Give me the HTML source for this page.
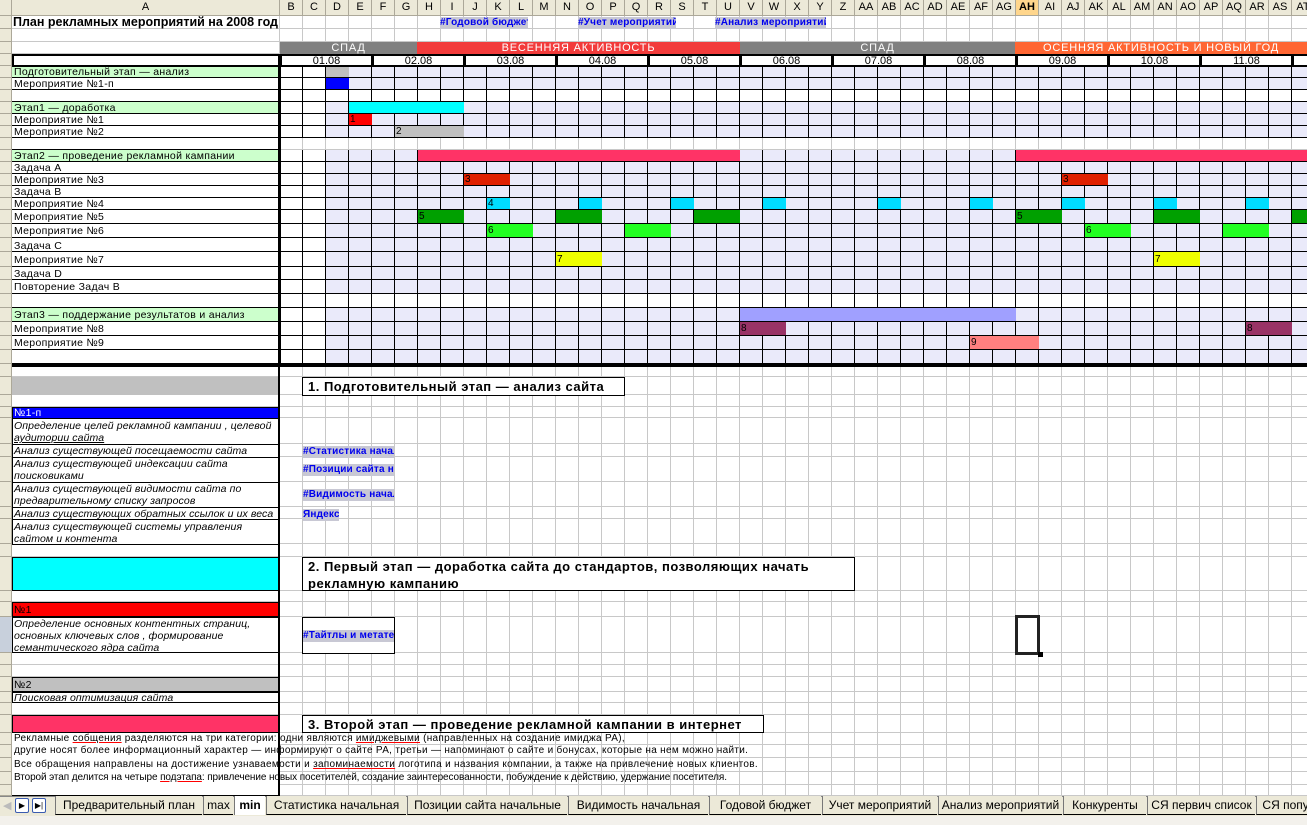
<!DOCTYPE html>
<html><head><meta charset="utf-8"><style>
*{margin:0;padding:0;box-sizing:border-box}
body{width:1307px;height:825px;position:relative;overflow:hidden;background:#fff;font-family:"Liberation Sans","DejaVu Sans",sans-serif;font-size:11px;color:#000}
.a{position:absolute;white-space:nowrap}
.t{position:absolute;white-space:nowrap;font-size:10.5px;line-height:12px;letter-spacing:.3px;padding-left:2px}
.it{font-style:italic;letter-spacing:.1px;font-size:10.5px}
.lk{position:absolute;color:#0000ee;font-weight:bold;font-size:10px;background:#c8c8d4;line-height:12px;letter-spacing:.2px;white-space:nowrap;overflow:hidden}
.hd{position:absolute;top:0;height:16px;background:#ece9d8;border-right:1px solid #aca899;border-bottom:1px solid #aca899;text-align:center;font-size:11px;line-height:15px;color:#000}
.tab{position:absolute;top:796px;height:19px;line-height:18px;font-size:12px;text-align:center;border-bottom:1px solid #000}
.bx{position:absolute;border:1px solid #000;background:#fff;font-weight:bold;font-size:13px;letter-spacing:.5px;padding-left:5px;line-height:17px;white-space:nowrap}
</style></head><body>
<div id="g"></div>

<div class="a" style="left:13px;top:15px;font-weight:bold;font-size:12.5px;line-height:14px">План рекламных мероприятий на 2008 год</div>

<div class="lk" style="left:440px;top:17px;width:88px">#Годовой бюджет</div>
<div class="lk" style="left:578px;top:17px;width:98px">#Учет мероприятий</div>
<div class="lk" style="left:715px;top:17px;width:111px">#Анализ мероприятий</div>

<div id="txt">
<div class="t" style="left:12px;top:66px">Подготовительный этап — анализ</div>
<div class="t" style="left:12px;top:78px">Мероприятие №1-п</div>
<div class="t" style="left:12px;top:102px">Этап1 — доработка</div>
<div class="t" style="left:12px;top:114px">Мероприятие №1</div>
<div class="t" style="left:12px;top:126px">Мероприятие №2</div>
<div class="t" style="left:12px;top:150px">Этап2 — проведение рекламной кампании</div>
<div class="t" style="left:12px;top:162px">Задача А</div>
<div class="t" style="left:12px;top:174px">Мероприятие №3</div>
<div class="t" style="left:12px;top:186px">Задача В</div>
<div class="t" style="left:12px;top:198px">Мероприятие №4</div>
<div class="t" style="left:12px;top:211px">Мероприятие №5</div>
<div class="t" style="left:12px;top:225px">Мероприятие №6</div>
<div class="t" style="left:12px;top:240px">Задача С</div>
<div class="t" style="left:12px;top:254px">Мероприятие №7</div>
<div class="t" style="left:12px;top:268px">Задача D</div>
<div class="t" style="left:12px;top:281px">Повторение Задач В</div>
<div class="t" style="left:12px;top:309px">Этап3 — поддержание результатов и анализ</div>
<div class="t" style="left:12px;top:323px">Мероприятие №8</div>
<div class="t" style="left:12px;top:337px">Мероприятие №9</div>

<div class="t" style="left:12px;top:407px;color:#fff">№1-п</div>
<div class="t it" style="left:12px;top:420px">Определение целей рекламной кампании , целевой</div>
<div class="t it" style="left:12px;top:432px;text-decoration:underline">аудитории сайта</div>
<div class="t it" style="left:12px;top:445px">Анализ существующей посещаемости сайта</div>
<div class="t it" style="left:12px;top:458px">Анализ существующей индексации сайта</div>
<div class="t it" style="left:12px;top:470px">поисковиками</div>
<div class="t it" style="left:12px;top:483px">Анализ существующей видимости сайта по</div>
<div class="t it" style="left:12px;top:495px">предварительному списку запросов</div>
<div class="t it" style="left:12px;top:508px">Анализ существующих обратных ссылок и их веса</div>
<div class="t it" style="left:12px;top:521px">Анализ существующей системы управления</div>
<div class="t it" style="left:12px;top:533px">сайтом и контента</div>
<div class="t" style="left:12px;top:604px">№1</div>
<div class="t it" style="left:12px;top:618px">Определение основных контентных страниц,</div>
<div class="t it" style="left:12px;top:630px">основных ключевых слов , формирование</div>
<div class="t it" style="left:12px;top:642px">семантического ядра сайта</div>
<div class="t" style="left:12px;top:679px">№2</div>
<div class="t it" style="left:12px;top:692px">Поисковая оптимизация сайта</div>
<div class="t" style="left:12px;top:733px;font-size:10px">Рекламные <span style="text-decoration:underline red">собщения</span> разделяются на три  категории: одни являются <span style="text-decoration:underline red">имиджевыми</span> (направленных на создание имиджа РА),</div>
<div class="t" style="left:12px;top:745px;font-size:10px">другие носят более информационный характер — информируют о сайте РА, третьи — напоминают о сайте и бонусах, которые на нем можно найти.</div>
<div class="t" style="left:12px;top:759px;font-size:10px">Все обращения направлены на достижение узнаваемости и <span style="text-decoration:underline red">запоминаемости</span> логотипа и названия компании, а также на привлечение новых клиентов.</div>
<div class="t" style="left:12px;top:772px;font-size:10px;letter-spacing:-.1px">Второй этап делится  на четыре <span style="text-decoration:underline red">подэтапа</span>: привлечение новых посетителей,  создание заинтересованности, побуждение к действию, удержание посетителя.</div>
</div>

<div class="bx" style="left:302px;top:377px;width:323px;height:19px">1. Подготовительный этап — анализ сайта</div>
<div class="bx" style="left:302px;top:557px;width:553px;height:34px;white-space:normal">2. Первый этап — доработка сайта до стандартов, позволяющих начать рекламную кампанию</div>
<div class="bx" style="left:302px;top:715px;width:462px;height:18px">3. Второй этап — проведение рекламной кампании в интернет</div>
<div class="a" style="left:302px;top:617px;width:93px;height:37px;border:1px solid #000;background:#fff"></div>
<div class="lk" style="left:303px;top:630px;width:91px">#Тайтлы и метатеги</div>
<div class="lk" style="left:303px;top:446px;width:91px">#Статистика начальная</div>
<div class="lk" style="left:303px;top:464px;width:91px">#Позиции сайта начальные</div>
<div class="lk" style="left:303px;top:489px;width:91px">#Видимость начальная</div>
<div class="lk" style="left:303px;top:509px;width:36px">Яндекс</div>

<div class="a" style="left:1015px;top:615px;width:25px;height:40px;border:3px solid #222"></div>
<div class="a" style="left:1038px;top:652px;width:5px;height:5px;background:#000"></div>

<div class="a" style="left:0;top:796px;width:1307px;height:20px;background:#ece9d8;border-top:1px solid #888"></div>
<div class="a" style="left:0;top:816px;width:1307px;height:9px;background:#f3f1ec"></div>
<div class="a" style="left:3px;top:799px;font-size:11px;color:#bbb">◀</div>
<div class="a" style="left:15px;top:798px;width:14px;height:15px;border:1px solid #3a5bb0;border-radius:2px;background:#fff;font-size:8px;text-align:center;line-height:13px">▶</div>
<div class="a" style="left:32px;top:798px;width:14px;height:15px;border:1px solid #3a5bb0;border-radius:2px;background:#fff;font-size:8px;text-align:center;line-height:13px">▶|</div>
<div id="tabs"></div>

<script>
var g=document.getElementById('g');
function d(x,y,w,h,s){var e=document.createElement('div');e.style.cssText='position:absolute;left:'+x+'px;top:'+y+'px;width:'+w+'px;height:'+h+'px;'+(s||'');g.appendChild(e);return e;}
var rb=[15,29,42,54,66,78,90,102,114,126,138,150,162,174,186,198,210,224,238,252,267,280,294,308,322,336,350,364,377,395,407,418,444,457,482,507,519,544,557,591,602,617,653,665,677,692,703,715,733,745,758,772,785,796];
for(var i=0;i<rb.length;i++){d(0,rb[i]-1,1307,1,'background:#c8c8c8');}
for(var x=279;x<1307;x+=23){d(x,15,1,781,'background:#c8c8c8');}
d(0,15,12,781,'background:#ece9d8;border-right:1px solid #aca899');
d(0,617,12,36,'background:#c8d0dc');
for(var i=0;i<rb.length;i++){d(0,rb[i]-1,12,1,'background:#aca899');}
var L=['B','C','D','E','F','G','H','I','J','K','L','M','N','O','P','Q','R','S','T','U','V','W','X','Y','Z','AA','AB','AC','AD','AE','AF','AG','AH','AI','AJ','AK','AL','AM','AN','AO','AP','AQ','AR','AS','AT'];
d(0,0,12,16,'background:#ece9d8;border-right:1px solid #aca899;border-bottom:1px solid #aca899');
var h=d(12,0,268,16,'');h.className='hd';h.textContent='A';
for(var i=0;i<L.length;i++){var e=d(280+23*i,0,23,16,'');e.className='hd';e.textContent=L[i];if(L[i]=='AH'){e.style.fontWeight='bold';e.style.background='#ffd68c';}}
function bar(x,w,c,t){var e=d(x,42,w,12,'background:'+c+';color:#fff;font-size:11px;line-height:12px;text-align:center;letter-spacing:.8px');e.textContent=t;}
bar(280,137,'#808080','СПАД');bar(417,323,'#f23b3b','ВЕСЕННЯЯ АКТИВНОСТЬ');bar(740,275,'#808080','СПАД');bar(1015,292,'#ff6633','ОСЕННЯЯ АКТИВНОСТЬ И НОВЫЙ ГОД');
var R=[[66,12,'g'],[78,12,'n'],[90,12,'w'],[102,12,'g'],[114,12,'n'],[126,12,'n'],[150,12,'g'],[162,12,'n'],[174,12,'n'],[186,12,'n'],[198,12,'n'],[210,14,'n'],[224,14,'n'],[238,14,'n'],[252,15,'n'],[267,13,'n'],[280,14,'n'],[294,14,'w'],[308,14,'g'],[322,14,'n'],[336,14,'n'],[350,14,'n']];
for(var r=0;r<R.length;r++){var y=R[r][0],hh=R[r][1];
 d(12,y,267,hh,'background:'+(R[r][2]=='g'?'#ccffcc':'#fff')+';border-bottom:1px solid #000');
 for(var i=0;i<45;i++){var bg=(i<2||R[r][2]=='w')?'#fff':'#eaeafa';d(280+23*i,y,23,hh,'background:'+bg+';border-right:1px solid #000;border-bottom:1px solid #000');}
}
d(12,138,267,12,'background:#fff;border-bottom:1px solid #000');
function c(y,hh,a,b,col){d(280+23*a,y,23*(b-a+1),hh-1,'background:'+col);}
c(66,12,2,2,'#c0c0c0');c(78,12,2,2,'#0000ff');c(102,12,3,7,'#00ffff');c(114,12,3,3,'#ff0000');c(126,12,5,7,'#c0c0c0');
c(150,12,6,19,'#ff3366');c(150,12,32,44,'#ff3366');
c(174,12,8,9,'#e02000');c(174,12,34,35,'#e02000');
[9,13,17,21,26,30,34,38,42].forEach(function(i){c(198,12,i,i,'#00ddff');});
[[6,7],[12,13],[18,19],[32,33],[38,39],[44,44]].forEach(function(p){c(210,14,p[0],p[1],'#00a000');});
[[9,10],[15,16],[35,36],[41,42]].forEach(function(p){c(224,14,p[0],p[1],'#22ff22');});
c(252,15,12,13,'#eeff00');c(252,15,38,39,'#eeff00');
c(308,14,20,31,'#a0a0ff');c(322,14,20,21,'#993366');c(322,14,42,43,'#993366');c(336,14,30,32,'#ff8080');
d(12,54,268,13,'background:#fff;border:2px solid #000');
var ds=['01.08','02.08','03.08','04.08','05.08','06.08','07.08','08.08','09.08','10.08','11.08',''];
for(var k=0;k<12;k++){var e=d(280+92*k,54,93,13,'background:#fff;border:2px solid #000;text-align:center;font-size:11px;line-height:10px');e.textContent=ds[k];}
d(278,54,3,311,'background:#000');
d(12,364,1295,3,'background:#000');
function bx(y,hh,bg){d(12,y,268,hh,'background:'+bg+';border:1px solid #000');}
d(12,377,267,18,'background:#c0c0c0');
bx(407,12,'#0000ff');
[[418,26],[444,13],[457,25],[482,25],[507,12],[519,25]].forEach(function(p){bx(p[0],p[1]+1,'#fff');});
bx(557,34,'#00ffff');bx(602,15,'#ff0000');bx(617,36,'#fff');bx(677,15,'#c0c0c0');bx(692,11,'#fff');bx(715,18,'#ff3366');
d(12,733,268,63,'background:#fff;border-bottom:1px solid #000');
d(278,364,2,432,'background:#000');
function n(y,i,t){var e=d(280+23*i,y,12,12,'font-size:10px;line-height:12px;padding-left:1px');e.textContent=t;}
n(114,3,'1');n(126,5,'2');n(174,8,'3');n(174,34,'3');n(198,9,'4');n(211,6,'5');n(211,32,'5');n(225,9,'6');n(225,35,'6');n(254,12,'7');n(254,38,'7');n(323,20,'8');n(323,42,'8');n(337,30,'9');
document.body.appendChild(document.getElementById('txt'));
var T=[['Предварительный план',55,147],['max',203,30],['min',234,31],['Статистика начальная',266,140],['Позиции сайта начальные',407,160],['Видимость начальная',568,140],['Годовой бюджет',709,112],['Учет мероприятий',822,115],['Анализ мероприятий',938,124],['Конкуренты',1063,83],['СЯ первич список',1147,108],['СЯ популярные',1256,100]];
var tb=document.getElementById('tabs');
T.forEach(function(t){var e=document.createElement('div');e.className='tab';e.style.left=t[1]+'px';e.style.width=t[2]+'px';e.style.borderLeft='1px solid #777';e.textContent=t[0];if(t[0]=='min'){e.style.background='#fff';e.style.fontWeight='bold';e.style.borderBottom='none';}else e.style.background='#ece9d8';tb.appendChild(e);});
document.body.appendChild(tb);
</script>
</body></html>
